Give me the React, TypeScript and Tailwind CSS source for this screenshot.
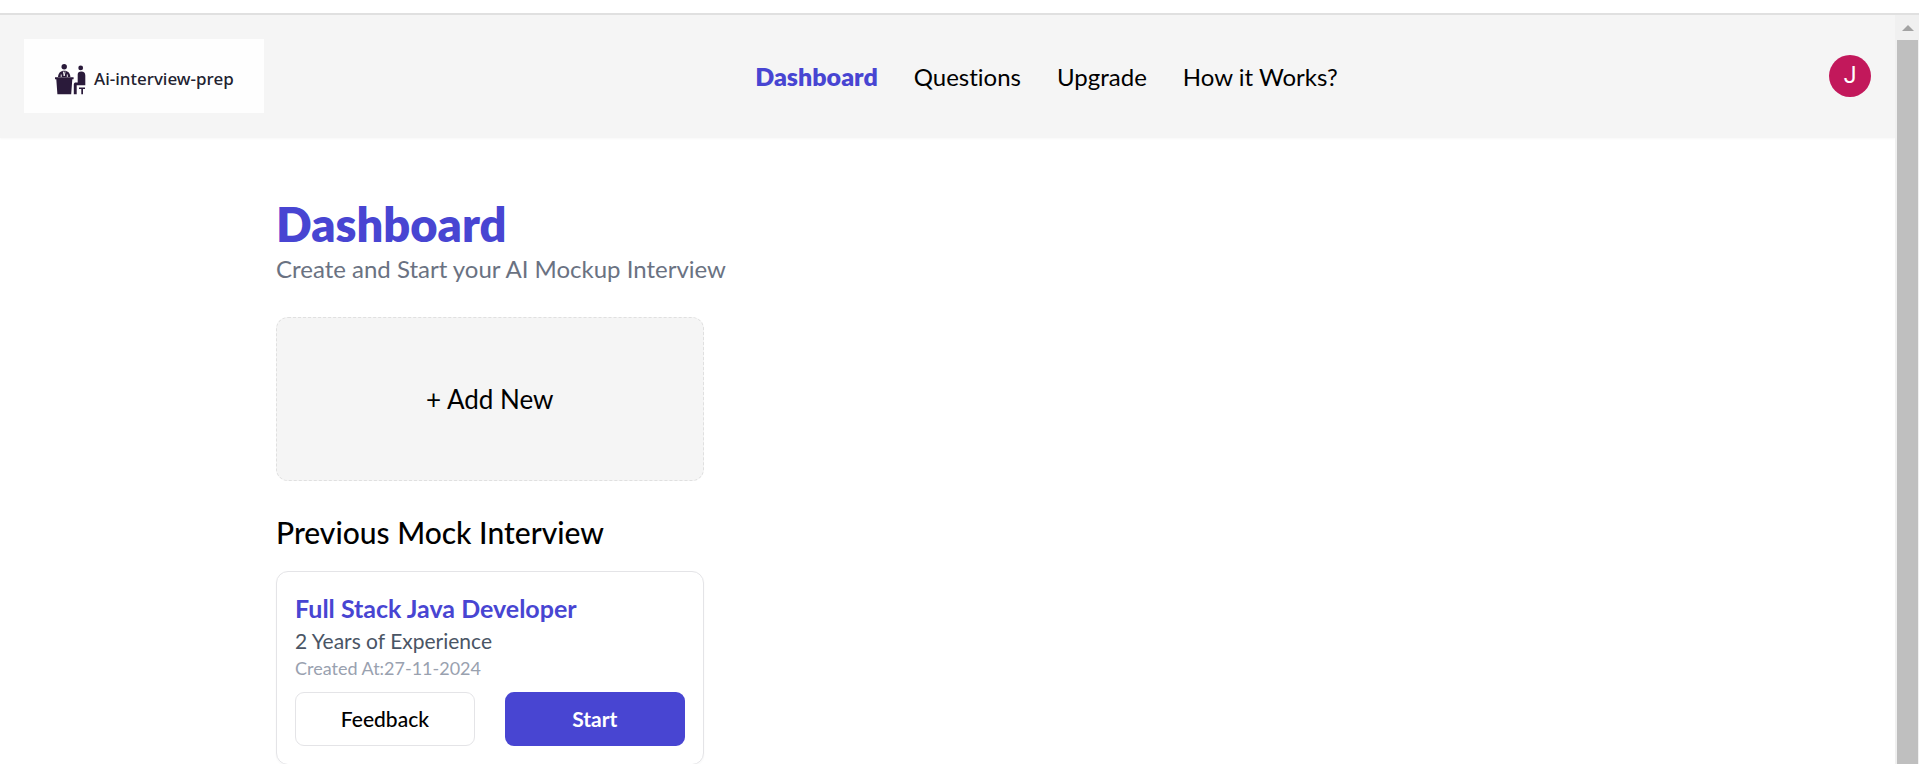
const links = [
  { label: "Questions", href: "#questions" },
  { label: "Upgrade", href: "#upgrade" },
  { label: "How it Works?", href: "#how-it-works" },
];

function LogoMark() {
  return (
    <svg viewBox="0 0 31 31" className="h-[31px] w-[31px] shrink-0" fill="#2a1a3a" aria-hidden="true">
      <circle cx="9.2" cy="2.8" r="2.7" />
      <path d="M3 13C3.400 9 5.500 6.800 9.200 6.800S15 9 15.400 13Z" />
      <path d="M6.200 13V10.500M12.300 13V10.500M8.300 7.500L9.200 12L10.100 7.500" stroke="#fdfdfd" strokeWidth="0.9" fill="none" />
      <path d="M0 13.200H18.600V15.300H17.300L16.200 30.300H2.400L1.300 15.300H0Z" />
      <circle cx="25.700" cy="3.900" r="2.400" />
      <path d="M22.700 10.500C22.700 8.600 24 7.500 26.200 7.500C29 7.500 30.300 9 30.300 11.500V21.300H21.700V30.300H18.800V20.500C18.800 19 19.600 18.400 21 18.400H22.700Z" />
      <path d="M24 23.600H30V25H28V30.300H26.300V25H24Z" />
    </svg>
  );
}

function Header() {
  return (
    <header className="flex items-center justify-between bg-[#f5f5f5] px-6 pt-6 pb-[25px] shadow-[0_1px_2px_0_rgb(0_0_0/0.03)]">
      <a href="#home" className="flex h-[74px] w-60 items-center gap-2 bg-[#fefefe] pt-1.5 pl-[31px] font-['Noto_Sans'] text-[17px] font-medium text-[#222230]">
        <LogoMark />
        Ai-interview-prep
      </a>
      <nav className="flex items-baseline gap-9 text-2xl leading-9 text-black">
        <a href="#dashboard" className="text-[25px] font-extrabold text-[#4845d2]">
          Dashboard
        </a>
        {links.map((l) => (
          <a key={l.label} href={l.href}>
            {l.label}
          </a>
        ))}
      </nav>
      <button
        type="button"
        aria-label="Account"
        className="flex size-[42px] items-center justify-center rounded-full bg-[#c2185b] font-[Roboto] text-[23px] text-white"
      >
        J
      </button>
    </header>
  );
}

function InterviewCard() {
  return (
    <article className="rounded-xl border border-[#e4e4e7] p-[18px] shadow-[0_1px_2px_0_rgb(0_0_0/0.04)]">
      <h3 className="text-[25px] leading-9 font-bold text-[#4845d2]">Full Stack Java Developer</h3>
      <p className="text-[21px] leading-[30px] text-gray-600">2 Years of Experience</p>
      <p className="text-lg leading-6 text-gray-400">Created At:27-11-2024</p>
      <div className="mt-3 grid grid-cols-2 gap-[30px] text-[21px] font-medium">
        <button type="button" className="h-[54px] rounded-[9px] border border-[#e4e4e7] bg-white text-black">
          Feedback
        </button>
        <button type="button" className="h-[54px] rounded-[9px] bg-[#4845d2] font-bold text-white">
          Start
        </button>
      </div>
    </article>
  );
}

function Scrollbar() {
  return (
    <div className="flex w-6 shrink-0 flex-col bg-[#f0f0f0] pr-px pl-0.5" aria-hidden="true">
      <div className="flex h-[25px] items-center justify-center">
        <svg viewBox="0 0 12 6" className="h-1.5 w-3" fill="#a3a3a3">
          <path d="M6 0L12 6H0Z" />
        </svg>
      </div>
      <div className="flex-1 bg-[#bfbfbf]" />
    </div>
  );
}

export default function App() {
  return (
    <div className="flex h-screen flex-col overflow-hidden bg-white pt-[13px] font-[Lato,sans-serif] [font-variant-ligatures:none]">
      <div className="flex min-h-0 flex-1 border-t-2 border-[#e0e0e0]">
        <div className="min-w-0 flex-1 overflow-hidden">
          <Header />
          <main className="mx-6 pt-[59px] pb-[60px] md:mx-20 lg:mx-[276px]">
            <h1 className="text-[47px] leading-[54px] font-extrabold text-[#4845d2]">Dashboard</h1>
            <p className="text-2xl leading-9 text-gray-500">Create and Start your AI Mockup Interview</p>
            <div className="my-[30px] grid grid-cols-1 gap-[30px] md:grid-cols-3">
              <button
                type="button"
                className="h-[164px] rounded-xl border border-dashed border-[#e0e0e0] bg-[#f5f5f5] text-[26px] text-black"
              >
                + Add New
              </button>
            </div>
            <h2 className="text-[30px] leading-[42px] font-medium text-black">Previous Mock Interview</h2>
            <div className="mt-[18px] grid grid-cols-1 gap-[30px] md:grid-cols-3">
              <InterviewCard />
            </div>
          </main>
        </div>
        <Scrollbar />
      </div>
    </div>
  );
}
